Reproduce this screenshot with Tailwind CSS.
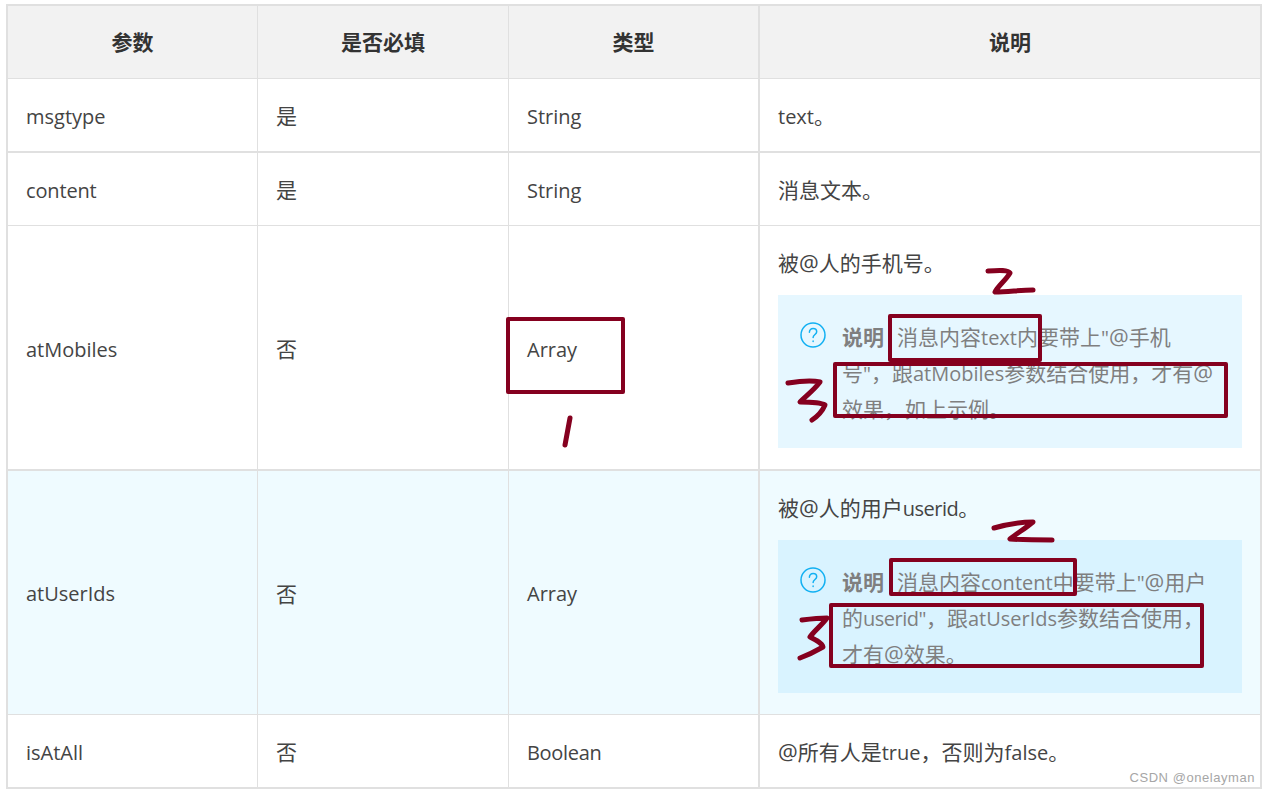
<!DOCTYPE html>
<html lang="zh-CN">
  <head>
    <meta charset="UTF-8" />
    <meta name="viewport" content="width=device-width, initial-scale=1.0" />
    <script src="https://cdn.jsdelivr.net/npm/@tailwindcss/browser@4"></script>
    <title>参数说明</title>
  </head>
  <body class="relative h-[795px] w-[1270px] overflow-hidden bg-white font-['Open_Sans','Noto_Sans_CJK_SC',sans-serif] text-[21px] leading-[36px] text-[#444444]">
    <div class="pl-[6px] pt-[4px]">
      <table class="w-[1256px] table-fixed border-separate border-spacing-0 border-2 border-[#e0e0e0]">
        <colgroup>
          <col class="w-[250px]" />
          <col class="w-[251px]" />
          <col class="w-[251px]" />
          <col class="w-[500px]" />
        </colgroup>
        <thead>
          <tr class="h-[73px] bg-[#f2f2f2] font-bold text-[#333333]">
            <th class="border-r border-b border-[#e0e0e0] text-center">参数</th>
            <th class="border-r border-b border-[#e0e0e0] text-center">是否必填</th>
            <th class="border-r-2 border-b border-[#e0e0e0] text-center">类型</th>
            <th class="border-b border-[#e0e0e0] text-center">说明</th>
          </tr>
        </thead>
        <tbody>
          <tr class="h-[74px]">
            <td class="border-r border-b-2 border-[#e0e0e0] pl-[18px] pt-[4px] text-[20px]">msgtype</td>
            <td class="border-r border-b-2 border-[#e0e0e0] pl-[18px] pt-[2px]">是</td>
            <td class="border-r-2 border-b-2 border-[#e0e0e0] pl-[18px] pt-[4px] text-[20px]">String</td>
            <td class="border-b-2 border-[#e0e0e0] pl-[18px] pt-[2px]"><span class="text-[20px] leading-none">text</span>。</td>
          </tr>
          <tr class="h-[73px]">
            <td class="border-r border-b border-[#e0e0e0] pl-[18px] pt-[4px] text-[20px] tracking-[-0.15px]">content</td>
            <td class="border-r border-b border-[#e0e0e0] pl-[18px] pt-[2px]">是</td>
            <td class="border-r-2 border-b border-[#e0e0e0] pl-[18px] pt-[4px] text-[20px]">String</td>
            <td class="border-b border-[#e0e0e0] pl-[18px] pt-[2px]">消息文本。</td>
          </tr>
          <tr class="h-[245px]">
            <td class="border-r border-b-2 border-[#e0e0e0] pl-[18px] pt-[4px] text-[20px]">atMobiles</td>
            <td class="border-r border-b-2 border-[#e0e0e0] pl-[18px] pt-[2px]">否</td>
            <td class="border-r-2 border-b-2 border-[#e0e0e0] pl-[18px] pt-[4px] text-[20px]">Array</td>
            <td class="border-b-2 border-[#e0e0e0] px-[18px] pt-[19px] align-top">
              <p>被<span class="text-[22px] leading-none">@</span>人的手机号。</p>
              <div class="mt-[14px] flex h-[153px] bg-[#e6f7ff] pl-[22px] pt-[24px] text-[#7f7f7f]">
                <svg class="mt-[3px] shrink-0" width="26" height="26" viewBox="0 0 26 26" fill="none" stroke="#12b0f2" stroke-width="1.5" stroke-linecap="round">
                  <circle cx="13" cy="13" r="12" />
                  <path d="M9.4 10.2c0-2.2 1.6-3.6 3.7-3.6s3.6 1.3 3.6 3.2c0 2.6-3.6 2.9-3.6 5.8" />
                  <path d="M13.1 18.9v.6" />
                </svg>
                <p class="ml-[16px] w-[395px]"><b class="mr-[13px] font-bold">说明</b>消息内容<span class="text-[20px] leading-none">text</span>内要带上<span class="text-[20px] leading-none">"</span><span class="text-[22px] leading-none">@</span>手机<br />号<span class="text-[20px] leading-none">"</span>，跟<span class="text-[20px] leading-none">atMobiles</span>参数结合使用，才有<span class="text-[22px] leading-none">@</span><br />效果，如上示例。</p>
              </div>
            </td>
          </tr>
          <tr class="h-[244px] bg-[#effbff]">
            <td class="border-r border-b border-[#e0e0e0] pl-[18px] pt-[2px] text-[20px]">atUserIds</td>
            <td class="border-r border-b border-[#e0e0e0] pl-[18px] pt-[2px]">否</td>
            <td class="border-r-2 border-b border-[#e0e0e0] pl-[18px] pt-[2px] text-[20px]">Array</td>
            <td class="border-b border-[#e0e0e0] px-[18px] pt-[19px] align-top">
              <p>被<span class="text-[22px] leading-none">@</span>人的用户<span class="text-[20px] leading-none tracking-[-0.5px]">userid</span>。</p>
              <div class="mt-[14px] flex h-[153px] bg-[#d9f3ff] pl-[22px] pt-[24px] text-[#7f7f7f]">
                <svg class="mt-[3px] shrink-0" width="26" height="26" viewBox="0 0 26 26" fill="none" stroke="#12b0f2" stroke-width="1.5" stroke-linecap="round">
                  <circle cx="13" cy="13" r="12" />
                  <path d="M9.4 10.2c0-2.2 1.6-3.6 3.7-3.6s3.6 1.3 3.6 3.2c0 2.6-3.6 2.9-3.6 5.8" />
                  <path d="M13.1 18.9v.6" />
                </svg>
                <p class="ml-[16px] w-[395px]"><b class="mr-[13px] font-bold">说明</b>消息内容<span class="text-[20px] leading-none">content</span>中要带上<span class="text-[20px] leading-none">"</span><span class="text-[22px] leading-none">@</span>用户<br />的<span class="text-[20px] leading-none tracking-[-0.5px]">userid"</span>，跟<span class="text-[20px] leading-none">atUserIds</span>参数结合使用，<br />才有<span class="text-[22px] leading-none">@</span>效果。</p>
              </div>
            </td>
          </tr>
          <tr class="h-[72px]">
            <td class="border-r border-[#e0e0e0] pl-[18px] pt-[4px] text-[20px]">isAtAll</td>
            <td class="border-r border-[#e0e0e0] pl-[18px] pt-[2px]">否</td>
            <td class="border-r-2 border-[#e0e0e0] pl-[18px] pt-[4px] text-[20px] tracking-[-0.3px]">Boolean</td>
            <td class="pl-[18px] pt-[2px]"><span class="text-[22px] leading-none">@</span>所有人是<span class="text-[20px] leading-none">true</span>，否则为<span class="text-[20px] leading-none">false</span>。</td>
          </tr>
        </tbody>
      </table>
    </div>

    <!-- hand drawn marks on top of the table -->
    <svg class="pointer-events-none absolute top-0 left-0" width="1270" height="795" fill="none" stroke="#85001f" stroke-linecap="round" stroke-linejoin="round">
      <g stroke-width="4">
        <rect x="508" y="319" width="115" height="73" />
        <rect x="890" y="316" width="150" height="44" />
        <rect x="835" y="364" width="391" height="52" />
        <rect x="891" y="560" width="184" height="34" />
        <rect x="831" y="605" width="371" height="61" />
      </g>
      <g stroke-width="5">
        <path d="M570 418 565 445" />
        <path d="M988 271C1000 270 1008 270 1010 273 1006 280 998 286 995 292 1008 292 1020 290 1033 290" />
        <path d="M788 383C800 381 812 380 820 382 814 390 806 396 800 402 808 402 820 402 825 405 822 412 818 416 812 420" />
        <path d="M994 528C1008 524 1020 522 1033 522 1026 528 1016 534 1010 539 1024 540 1038 540 1052 540" />
        <path d="M802 620C810 619 820 618 827 618 822 625 814 631 810 637 816 640 822 643 823 647 816 651 808 655 800 658" />
      </g>
    </svg>

    <span class="absolute top-[769px] right-[15px] font-['Liberation_Sans',sans-serif] text-[13px] leading-[18px] tracking-[0.55px] text-[#a6a6a6]">CSDN @onelayman</span>
  </body>
</html>
